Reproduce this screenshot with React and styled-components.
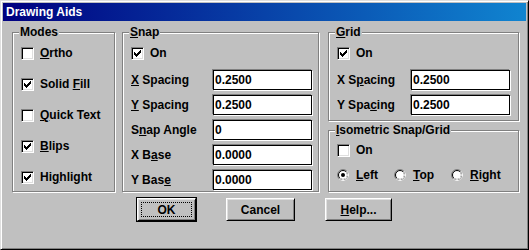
import React from 'react';
import styled, { createGlobalStyle, css } from 'styled-components';

const face = '#c0c0c0';
const shadow = '#808080';
const light = '#dfdfdf';

const GlobalStyle = createGlobalStyle`
  html, body { margin: 0; padding: 0; background: ${face}; }
  body { font-family: "Liberation Sans", Arial, sans-serif; font-size: 12px; font-weight: bold; color: #000; }
`;

/* ===== Janela ===== */
const Window = styled.div`
  width: 529px; height: 250px; box-sizing: border-box;
  background: ${face};
  border: 1px solid; border-color: ${light} #000 #000 ${light};
  box-shadow: inset 1px 1px 0 #fff, inset -1px -1px 0 ${shadow};
  padding: 2px;
  display: flex; flex-direction: column;
`;

const TitleBar = styled.div`
  height: 18px; line-height: 18px; padding-left: 3px;
  background: linear-gradient(90deg, #000080 0%, #1084d0 100%);
  color: #fff; font-weight: bold; font-size: 12px;
`;

const Body = styled.div`
  display: flex; flex-direction: column;
  padding: 11px 0 0 9px;
`;

const Columns = styled.div`
  display: flex; height: 160px;
`;

const RightColumn = styled.div`
  display: flex; flex-direction: column;
  width: 191px; margin-left: 9px;
`;

/* ===== Group box ===== */
const Group = styled.div`
  position: relative; box-sizing: border-box;
  width: ${(p) => p.$width || 'auto'};
  height: ${(p) => p.$height || 'auto'};
  flex: ${(p) => p.$grow ? 1 : 'none'};
  margin-left: ${(p) => p.$left || '0px'};
  margin-top: ${(p) => p.$top || '0px'};
  border: 1px solid ${shadow};
  box-shadow: inset 1px 1px 0 #fff, 1px 1px 0 #fff;
  padding: ${(p) => p.$pad || '12px 0 0 8px'};
  display: flex; flex-direction: column;
`;

const GroupLabel = styled.span`
  position: absolute; top: -8px; left: 6px;
  padding: 0 1px; line-height: 14px;
  background: ${face}; white-space: nowrap;
`;

const U = styled.span` text-decoration: underline; `;

/* ===== Checkbox ===== */
const CheckRow = styled.div`
  display: flex; align-items: center; height: 16px;
  margin-top: ${(p) => p.$top || '0px'};
`;

const Box = styled.span`
  width: 13px; height: 13px; box-sizing: border-box; flex: none;
  background: #fff;
  border: 1px solid; border-color: ${shadow} #fff #fff ${shadow};
  box-shadow: inset 1px 1px 0 #000, inset -1px -1px 0 ${light};
  display: flex; align-items: center; justify-content: center;
`;

const ItemText = styled.span`
  margin-left: 6px; white-space: nowrap; line-height: 16px;
`;

const CheckList = styled.div`
  display: flex; flex-direction: column; gap: 15px;
`;

function Checkbox({ checked, children, top }) {
  return (
    <CheckRow $top={top}>
      <Box>
        {checked && (
          <svg width="7" height="7" viewBox="0 0 7 7" shapeRendering="crispEdges">
            <path d="M6 0h1v3h-1v1h-1v1h-1v1h-1v1h-1v-1h-1v-1h-1v-3h1v1h1v1h1v-1h1v-1h1v-1h1z" fill="#000" />
          </svg>
        )}
      </Box>
      <ItemText>{children}</ItemText>
    </CheckRow>
  );
}

/* ===== Radio ===== */
const RadioRow = styled.div`
  display: flex; align-items: center; height: 16px; margin-top: 9px;
`;

const RadioItem = styled.div`
  display: flex; align-items: center; width: 57px; flex: none;
`;

const RadioText = styled.span` margin-left: 7px; white-space: nowrap; line-height: 16px; `;

function Radio({ checked, children }) {
  return (
    <RadioItem>
      <svg width="12" height="12" viewBox="0 0 12 12">
        <circle cx="6" cy="6" r="4.5" fill="#fff" />
        <circle cx="6" cy="6" r="5.5" fill="none" stroke={shadow} />
        <path d="M9.89 2.11A5.5 5.5 0 0 1 2.11 9.89" fill="none" stroke="#fff" />
        <circle cx="6" cy="6" r="4.5" fill="none" stroke="#000" />
        <path d="M9.18 2.82A4.5 4.5 0 0 1 2.82 9.18" fill="none" stroke={light} />
        {checked && <circle cx="6" cy="6" r="2" fill="#000" />}
      </svg>
      <RadioText>{children}</RadioText>
    </RadioItem>
  );
}

/* ===== Campos ===== */
const Fields = styled.div`
  display: flex; flex-direction: column; gap: 5px; margin-top: 9px;
`;

const FieldRow = styled.div`
  display: grid; grid-template-columns: ${(p) => p.$labelWidth} 99px;
  align-items: center; height: 20px;
`;

const FieldLabel = styled.span` white-space: nowrap; `;

const Input = styled.div`
  box-sizing: border-box; height: 20px; width: 99px;
  background: #fff; border: 1px solid #000;
  box-shadow: 1px 1px 0 #fff, -1px -1px 0 ${shadow};
  padding-left: 1px; line-height: 18px;
`;

function Field({ label, value, labelWidth }) {
  return (
    <FieldRow $labelWidth={labelWidth}>
      <FieldLabel>{label}</FieldLabel>
      <Input>{value}</Input>
    </FieldRow>
  );
}

/* ===== Botões ===== */
const ButtonRow = styled.div`
  display: flex; justify-content: center; gap: 30px;
  margin-top: 6px; padding-right: 9px;
`;

const Button = styled.button`
  box-sizing: border-box; height: 23px; width: ${(p) => p.$width};
  font: inherit; color: #000; background: ${face};
  border: 1px solid; border-color: #fff #000 #000 #fff;
  box-shadow: inset 1px 1px 0 ${light}, inset -1px -1px 0 ${shadow};
  padding: 0; position: relative; cursor: default;
  ${(p) => p.$default && css`
    outline: 1px solid #000;
    &::after {
      content: ''; position: absolute; inset: 3px;
      border: 1px dotted #000;
    }
  `}
`;

export default function App() {
  const snapW = '82px';
  const gridW = '74px';
  return (
    <>
      <GlobalStyle />
      <Window>
        <TitleBar>Drawing Aids</TitleBar>
        <Body>
          <Columns>
            <Group $width="103px">
              <GroupLabel>Modes</GroupLabel>
              <CheckList>
                <Checkbox><U>O</U>rtho</Checkbox>
                <Checkbox checked>Solid <U>F</U>ill</Checkbox>
                <Checkbox><U>Q</U>uick Text</Checkbox>
                <Checkbox checked><U>B</U>lips</Checkbox>
                <Checkbox checked>Hi<U>g</U>hlight</Checkbox>
              </CheckList>
            </Group>

            <Group $width="197px" $left="7px">
              <GroupLabel><U>S</U>nap</GroupLabel>
              <Checkbox checked>On</Checkbox>
              <Fields>
                <Field labelWidth={snapW} label={<><U>X</U> Spacing</>} value="0.2500" />
                <Field labelWidth={snapW} label={<><U>Y</U> Spacing</>} value="0.2500" />
                <Field labelWidth={snapW} label={<>S<U>n</U>ap Angle</>} value="0" />
                <Field labelWidth={snapW} label={<>X B<U>a</U>se</>} value="0.0000" />
                <Field labelWidth={snapW} label={<>Y Bas<U>e</U></>} value="0.0000" />
              </Fields>
            </Group>

            <RightColumn>
              <Group $height="89px">
                <GroupLabel><U>G</U>rid</GroupLabel>
                <Checkbox checked>On</Checkbox>
                <Fields>
                  <Field labelWidth={gridW} label={<>X S<U>p</U>acing</>} value="0.2500" />
                  <Field labelWidth={gridW} label={<>Y Spa<U>c</U>ing</>} value="0.2500" />
                </Fields>
              </Group>
              <Group $grow $top="9px" $pad="11px 0 0 8px">
                <GroupLabel><U>I</U>sometric Snap/Grid</GroupLabel>
                <Checkbox>On</Checkbox>
                <RadioRow>
                  <Radio checked><U>L</U>eft</Radio>
                  <Radio><U>T</U>op</Radio>
                  <Radio><U>R</U>ight</Radio>
                </RadioRow>
              </Group>
            </RightColumn>
          </Columns>

          <ButtonRow>
            <Button $width="59px" $default>OK</Button>
            <Button $width="69px">Cancel</Button>
            <Button $width="67px"><U>H</U>elp...</Button>
          </ButtonRow>
        </Body>
      </Window>
    </>
  );
}
